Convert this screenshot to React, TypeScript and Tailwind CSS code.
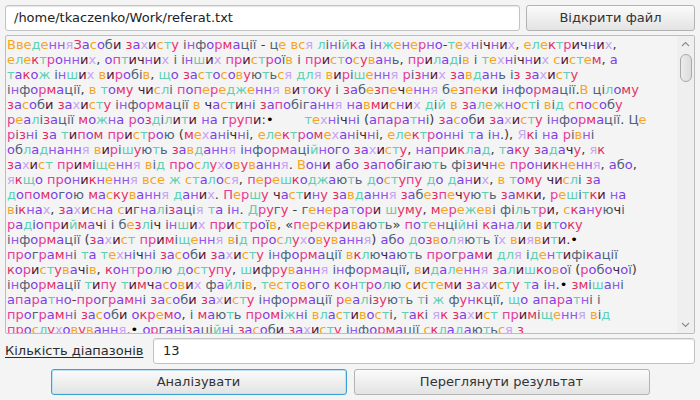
import React from "react";

const LINES = [
  "ВведенняЗасоби захисту інформації - це вся лінійка інженерно-технічних, електричних,",
  "електронних, оптичних і інших пристроїв і пристосувань, приладів і технічних систем, а",
  "також інших виробів, що застосовуються для вирішення різних завдань із захисту",
  "інформації, в тому числі попередження витоку і забезпечення безпеки інформації.В цілому",
  "засоби захисту інформації в частині запобігання навмисних дій в залежності від способу",
  "реалізації можна розділити на групи:•\tтехнічні (апаратні) засоби захисту інформації. Це",
  "різні за типом пристрою (механічні, електромеханічні, електронні та ін.), Які на рівні",
  "обладнання вирішують завдання інформаційного захисту, наприклад, таку задачу, як",
  "захист приміщення від прослуховування. Вони або запобігають фізичне проникнення, або,",
  "якщо проникнення все ж сталося, перешкоджають доступу до даних, в тому числі за",
  "допомогою маскування даних. Першу частину завдання забезпечують замки, решітки на",
  "вікнах, захисна сигналізація та ін. Другу - генератори шуму, мережеві фільтри, скануючі",
  "радіоприймачі і безліч інших пристроїв, «перекривають» потенційні канали витоку",
  "інформації (захист приміщення від прослуховування) або дозволяють їх виявити.•",
  "програмні та технічні засоби захисту інформації включають програми для ідентифікації",
  "користувачів, контролю доступу, шифрування інформації, видалення залишкової (робочої)",
  "інформації типу тимчасових файлів, тестового контролю системи захисту та ін.• змішані",
  "апаратно-програмні засоби захисту інформації реалізують ті ж функції, що апаратні і",
  "програмні засоби окремо, і мають проміжні властивості, такі як захист приміщення від",
  "прослуховування.• організаційні засоби захисту інформації складаються з",
];

// one colour per letter range
const ORANGE = "text-[#f5a524]";
const TEAL = "text-[#5fd0b4]";
const CRIMSON = "text-[#e12a5c]";
const PURPLE = "text-[#7a3fe4]";
const VIOLET = "text-[#9457ee]";
const LAVENDER = "text-[#c6a4f2]";
const MAROON = "text-[#5b1636]";
const MAGENTA = "text-[#e23d9b]";
const PINK = "text-[#e8336e]";
const SLATE = "text-[#4e6378]";
const DARK = "text-[#3a2438]";

const MAP: Record<string, string> = {
  а: PURPLE,
  б: SLATE,
  в: ORANGE,
  г: SLATE,
  д: TEAL,
  е: ORANGE,
  є: ORANGE,
  ж: TEAL,
  з: CRIMSON,
  и: MAROON,
  і: SLATE,
  ї: SLATE,
  й: TEAL,
  к: CRIMSON,
  л: TEAL,
  м: CRIMSON,
  н: VIOLET,
  о: PURPLE,
  п: MAGENTA,
  р: MAGENTA,
  с: ORANGE,
  т: TEAL,
  у: PINK,
  ф: SLATE,
  х: LAVENDER,
  ц: SLATE,
  ч: DARK,
  ш: TEAL,
  щ: TEAL,
  ь: SLATE,
  ю: SLATE,
  я: LAVENDER,
  "•": "text-black",
};

function colorOf(ch: string) {
  return MAP[ch.toLowerCase()] ?? "text-[#3b3b3b]";
}

function Line({ text }: { text: string }) {
  return (
    <div className="h-[15px] whitespace-pre leading-[15px] [tab-size:8]">
      {[...text].map((ch, i) => (
        <span key={i} className={colorOf(ch)}>
          {ch}
        </span>
      ))}
    </div>
  );
}

function Button({
  children,
  focused,
  className = "",
}: {
  children: React.ReactNode;
  focused?: boolean;
  className?: string;
}) {
  return (
    <button
      className={`flex h-[26px] items-center justify-center rounded-[3px] border bg-gradient-to-b from-[#fbfbfb] to-[#e3e3e3] text-[13px] text-[#333] ${
        focused
          ? "border-[#3aa3d6] shadow-[inset_0_0_0_1px_#bfe3f4]"
          : "border-[#b3b3b3]"
      } ${className}`}
    >
      {children}
    </button>
  );
}

function Chevron({ up }: { up?: boolean }) {
  return (
    <svg width="9" height="6" viewBox="0 0 9 6" className="mx-auto">
      <path
        d={up ? "M1 5 L4.5 1.5 L8 5" : "M1 1 L4.5 4.5 L8 1"}
        fill="none"
        stroke="#8a8a8a"
        strokeWidth="1.1"
      />
    </svg>
  );
}

export default function App() {
  return (
    <div className="flex h-[400px] w-[700px] flex-col bg-[#f4f4f4] p-[5px] font-['DejaVu_Sans',sans-serif] text-[13px] text-[#333]">
      <div className="flex gap-[6px]">
        <div className="flex h-[26px] flex-1 items-center rounded-[3px] border border-[#c3c3c3] bg-white pl-[8px] text-[#222] shadow-[inset_0_1px_1px_#e6e6e6]">
          /home/tkaczenko/Work/referat.txt
        </div>
        <Button className="w-[169px]">Відкрити файл</Button>
      </div>

      <div className="mt-[4px] flex h-[299px] rounded-[2px] border border-[#bdbdbd] bg-[#f4f4f4]">
        <div className="flex-1 overflow-hidden pl-[1px] pt-[1px]">
          {LINES.map((l, i) => (
            <Line key={i} text={l} />
          ))}
        </div>
        <div className="flex w-[17px] flex-col bg-[#efefef] py-[5px]">
          <Chevron up />
          <div className="mx-auto mt-[7px] h-[28px] w-[12px] rounded-[6px] border border-[#a9a9a9] bg-gradient-to-r from-[#ececec] to-[#dcdcdc]" />
          <div className="flex-1" />
          <Chevron />
        </div>
      </div>

      <div className="mt-[4px] flex h-[26px] items-center gap-[10px]">
        <span className="w-[138px] whitespace-nowrap text-[#2b2b2b] underline underline-offset-[2px]">
          Кількість діапазонів
        </span>
        <div className="flex h-[26px] flex-1 items-center rounded-[3px] border border-[#c3c3c3] bg-white pl-[9px] text-[#222] shadow-[inset_0_1px_1px_#e6e6e6]">
          13
        </div>
      </div>

      <div className="mt-[5px] flex justify-center gap-[7px]">
        <Button focused className="w-[296px]">
          Аналізувати
        </Button>
        <Button className="w-[296px]">Переглянути результат</Button>
      </div>
    </div>
  );
}
